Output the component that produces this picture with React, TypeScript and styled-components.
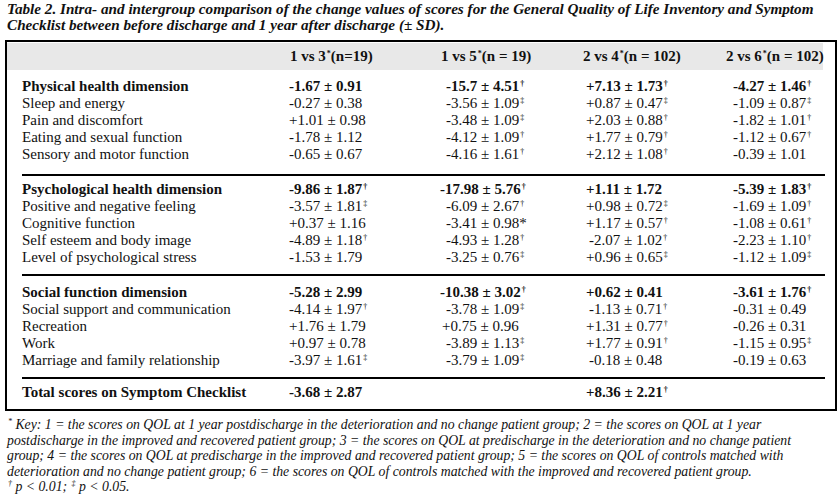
import React from 'react';
import styled, { createGlobalStyle } from 'styled-components';

const GlobalStyle = createGlobalStyle`
  html, body {
    margin: 0;
    padding: 0;
    background: #fff;
  }
`;

type Row = {
  label: string;
  values: string[];
  shifts?: number[];
};

type Section = {
  head: Row;
  rows: Row[];
  top: number;
  bottom: number;
};

const sections: Section[] = [
  {
    top: 8,
    bottom: 11,
    head: {
      label: 'Physical health dimension',
      values: ['-1.67 ± 0.91', '-15.7 ± 4.51†', '+7.13 ± 1.73†', '-4.27 ± 1.46†'],
    },
    rows: [
      { label: 'Sleep and energy', values: ['-0.27 ± 0.38', '-3.56 ± 1.09‡', '+0.87 ± 0.47‡', '-1.09 ± 0.87‡'] },
      { label: 'Pain and discomfort', values: ['+1.01 ± 0.98', '-3.48 ± 1.09‡', '+2.03 ± 0.88†', '-1.82 ± 1.01†'] },
      { label: 'Eating and sexual function', values: ['-1.78 ± 1.12', '-4.12 ± 1.09†', '+1.77 ± 0.79†', '-1.12 ± 0.67†'] },
      { label: 'Sensory and motor function', values: ['-0.65 ± 0.67', '-4.16 ± 1.61†', '+2.12 ± 1.08†', '-0.39 ± 1.01'] },
    ],
  },
  {
    top: 5,
    bottom: 8,
    head: {
      label: 'Psychological health dimension',
      values: ['-9.86 ± 1.87†', '-17.98 ± 5.76†', '+1.11 ± 1.72', '-5.39 ± 1.83†'],
      shifts: [0, -8, 0, 0],
    },
    rows: [
      { label: 'Positive and negative feeling', values: ['-3.57 ± 1.81‡', '-6.09 ± 2.67†', '+0.98 ± 0.72‡', '-1.69 ± 1.09†'] },
      { label: 'Cognitive function', values: ['+0.37 ± 1.16', '-3.41 ± 0.98*', '+1.17 ± 0.57†', '-1.08 ± 0.61†'] },
      {
        label: 'Self esteem and body image',
        values: ['-4.89 ± 1.18†', '-4.93 ± 1.28†', '-2.07 ± 1.02†', '-2.23 ± 1.10†'],
        shifts: [0, 0, 3, 0],
      },
      { label: 'Level of psychological stress', values: ['-1.53 ± 1.79', '-3.25 ± 0.76‡', '+0.96 ± 0.65‡', '-1.12 ± 1.09‡'] },
    ],
  },
  {
    top: 8,
    bottom: 8,
    head: {
      label: 'Social function dimension',
      values: ['-5.28 ± 2.99', '-10.38 ± 3.02†', '+0.62 ± 0.41', '-3.61 ± 1.76†'],
      shifts: [0, -8, 0, 0],
    },
    rows: [
      {
        label: 'Social support and communication',
        values: ['-4.14 ± 1.97†', '-3.78 ± 1.09‡', '-1.13 ± 0.71†', '-0.31 ± 0.49'],
        shifts: [0, 0, 3, 0],
      },
      {
        label: 'Recreation',
        values: ['+1.76 ± 1.79', '+0.75 ± 0.96', '+1.31 ± 0.77†', '-0.26 ± 0.31'],
        shifts: [0, -4, 0, 0],
      },
      { label: 'Work', values: ['+0.97 ± 0.78', '-3.89 ± 1.13‡', '+1.77 ± 0.91†', '-1.15 ± 0.95‡'] },
      {
        label: 'Marriage and family relationship',
        values: ['-3.97 ± 1.61‡', '-3.79 ± 1.09‡', '-0.18 ± 0.48', '-0.19 ± 0.63'],
        shifts: [0, 0, 3, 0],
      },
    ],
  },
];

const total: Row = {
  label: 'Total scores on Symptom Checklist',
  values: ['-3.68 ± 2.87', '', '+8.36 ± 2.21†', ''],
};

const headers = [
  { pre: '1 vs 3', post: '(n=19)' },
  { pre: '1 vs 5', post: '(n = 19)' },
  { pre: '2 vs 4', post: '(n = 102)' },
  { pre: '2 vs 6', post: '(n = 102)' },
];

const footLines = [
  'Key: 1 = the scores on QOL at 1 year postdischarge in the deterioration and no change patient group; 2 = the scores on QOL at 1 year',
  'postdischarge in the improved and recovered patient group; 3 = the scores on QOL at predischarge in the deterioration and no change patient',
  'group; 4 = the scores on QOL at predischarge in the improved and recovered patient group; 5 = the scores on QOL of controls matched with',
  'deterioration and no change patient group; 6 = the scores on QOL of controls matched with the improved and recovered patient group.',
];

// columns line up with the header starts, values sit a little further in
const columns = '267px 151px 142px 143px 1fr';
const valueIndent = [0, 6, 4, 8];

const Page = styled.div`
  width: 840px;
  padding: 1px 0 0 7px;
  box-sizing: border-box;
  font-family: 'Liberation Serif', 'Times New Roman', serif;
  color: #111;
`;

const Caption = styled.p`
  margin: 0;
  font-size: 15.2px;
  line-height: 15.5px;
  font-weight: bold;
  font-style: italic;
  white-space: nowrap;
`;

const TableBox = styled.div`
  margin: 8px 0 0 -2px;
  width: 832px;
  box-sizing: border-box;
  border: 2px solid #000;
  padding: 1px 12px 0 0;
`;

const HeaderBand = styled.div`
  display: grid;
  grid-template-columns: ${columns};
  padding-left: 15px;
  height: 27px;
  background: #e8e8e8;
  font-size: 15px;
  line-height: 27px;
  font-weight: bold;
  white-space: nowrap;
`;

const HeaderCell = styled.div`
  padding-left: 1px;
`;

const Block = styled.div<{ $top: number; $bottom: number; $first?: boolean }>`
  margin: 0 -2px 0 15px;
  padding: ${(p) => p.$top}px 0 ${(p) => p.$bottom}px;
  border-top: ${(p) => (p.$first ? 'none' : '2px solid #000')};
`;

const Line = styled.div<{ $bold?: boolean }>`
  display: grid;
  grid-template-columns: ${columns};
  font-size: 15px;
  line-height: 17px;
  font-weight: ${(p) => (p.$bold ? 'bold' : 'normal')};
  white-space: nowrap;
`;

const Value = styled.div<{ $indent: number }>`
  padding-left: ${(p) => p.$indent}px;
`;

const Mark = styled.sup`
  font-size: 8px;
  line-height: 0;
  vertical-align: 5px;
  margin-left: 1px;
`;

const Notes = styled.div`
  margin-top: 6px;
  font-size: 13.75px;
  line-height: 15.5px;
  font-style: italic;
  white-space: nowrap;
`;

const NoteLine = styled.div``;

const ValueText = ({ text }: { text: string }) => {
  const last = text.slice(-1);
  if (last === '†' || last === '‡') {
    return (
      <>
        {text.slice(0, -1)}
        <Mark>{last}</Mark>
      </>
    );
  }
  return <>{text}</>;
};

const TableRow = ({ row, bold }: { row: Row; bold?: boolean }) => (
  <Line $bold={bold}>
    <div>{row.label}</div>
    {row.values.map((v, i) => (
      <Value key={i} $indent={valueIndent[i] + (row.shifts ? row.shifts[i] : 0)}>
        <ValueText text={v} />
      </Value>
    ))}
  </Line>
);

export default function App() {
  return (
    <Page>
      <GlobalStyle />
      <Caption>
        Table 2. Intra- and intergroup comparison of the change values of scores for the General Quality of Life Inventory and Symptom
        <br />
        Checklist between before discharge and 1 year after discharge (± SD).
      </Caption>

      <TableBox>
        <HeaderBand>
          <div />
          {headers.map((h) => (
            <HeaderCell key={h.pre}>
              {h.pre}
              <Mark>*</Mark>
              {h.post}
            </HeaderCell>
          ))}
        </HeaderBand>

        {sections.map((s, i) => (
          <Block key={s.head.label} $first={i === 0} $top={s.top} $bottom={s.bottom}>
            <TableRow row={s.head} bold />
            {s.rows.map((r) => (
              <TableRow key={r.label} row={r} />
            ))}
          </Block>
        ))}

        <Block $top={5} $bottom={8}>
          <TableRow row={total} bold />
        </Block>
      </TableBox>

      <Notes>
        {footLines.map((l, i) => (
          <NoteLine key={i}>
            {i === 0 && <Mark>*</Mark>} {l}
          </NoteLine>
        ))}
        <NoteLine>
          <Mark>†</Mark> p &lt; 0.01; <Mark>‡</Mark> p &lt; 0.05.
        </NoteLine>
      </Notes>
    </Page>
  );
}
